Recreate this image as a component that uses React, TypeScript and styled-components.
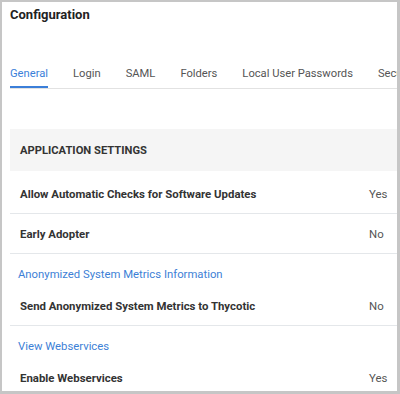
import React from 'react';
import styled, { createGlobalStyle } from 'styled-components';

const GlobalStyle = createGlobalStyle`
    html, body {
        margin: 0;
        padding: 0;
        background: #ffffff;
    }
    body {
        font-family: Roboto, 'Liberation Sans', Arial, sans-serif;
    }
`;

const Frame = styled.div`
    box-sizing: border-box;
    width: 400px;
    height: 394px;
    border-style: solid;
    border-color: #c6c6c6;
    border-width: 2px 3px 3px 2px;
    overflow: hidden;
    background: #fff;
`;

const Page = styled.div`
    padding: 5px 0 0 8px;
`;

const Title = styled.h1`
    margin: 0;
    font-size: 13px;
    line-height: 16px;
    font-weight: 700;
    color: #222;
`;

const TabBar = styled.nav`
    display: flex;
    gap: 25px;
    margin-top: 43px;
    border-bottom: 1px solid #e2e2e2;
    white-space: nowrap;
`;

const Tab = styled.div<{ $active?: boolean }>`
    font-size: 11.2px;
    line-height: 16px;
    padding-bottom: 4px;
    color: ${(p) => (p.$active ? '#3b7fd9' : '#555')};
    border-bottom: 2px solid ${(p) => (p.$active ? '#3b7fd9' : 'transparent')};
    flex-shrink: 0;
`;

const Card = styled.section`
    margin-top: 40px;
`;

const CardHeader = styled.div`
    height: 42px;
    display: flex;
    align-items: center;
    padding-left: 10px;
    background: #f5f5f5;
    font-size: 11.2px;
    font-weight: 700;
    color: #333;
`;

const Rows = styled.div`
    padding-top: 3px;
`;

const Row = styled.div<{ $last?: boolean }>`
    box-sizing: border-box;
    display: grid;
    grid-template-columns: 1fr 28px;
    align-items: center;
    height: 40px;
    padding-left: 10px;
    border-bottom: ${(p) => (p.$last ? 'none' : '1px solid #e4e7ea')};
    font-size: 11.4px;
`;

const Label = styled.span`
    font-weight: 700;
    color: #333;
`;

const Value = styled.span`
    color: #555;
`;

const LinkLine = styled.a`
    display: block;
    padding: 13px 0 3px 8px;
    font-size: 11.3px;
    line-height: 16px;
    color: #3d7fd6;
    text-decoration: none;
`;

const tabs = ['General', 'Login', 'SAML', 'Folders', 'Local User Passwords', 'Security'];

export default function App() {
    return (
        <>
            <GlobalStyle />
            <Frame>
                <Page>
                    <Title>Configuration</Title>
                    <TabBar>
                        {tabs.map((t, i) => (
                            <Tab key={t} $active={i === 0}>
                                {t}
                            </Tab>
                        ))}
                    </TabBar>
                    <Card>
                        <CardHeader>APPLICATION SETTINGS</CardHeader>
                        <Rows>
                            <Row>
                                <Label>Allow Automatic Checks for Software Updates</Label>
                                <Value>Yes</Value>
                            </Row>
                        </Rows>
                        <Row>
                            <Label>Early Adopter</Label>
                            <Value>No</Value>
                        </Row>
                        <LinkLine href="#">Anonymized System Metrics Information</LinkLine>
                        <Row>
                            <Label>Send Anonymized System Metrics to Thycotic</Label>
                            <Value>No</Value>
                        </Row>
                        <LinkLine href="#">View Webservices</LinkLine>
                        <Row $last>
                            <Label>Enable Webservices</Label>
                            <Value>Yes</Value>
                        </Row>
                    </Card>
                </Page>
            </Frame>
        </>
    );
}
